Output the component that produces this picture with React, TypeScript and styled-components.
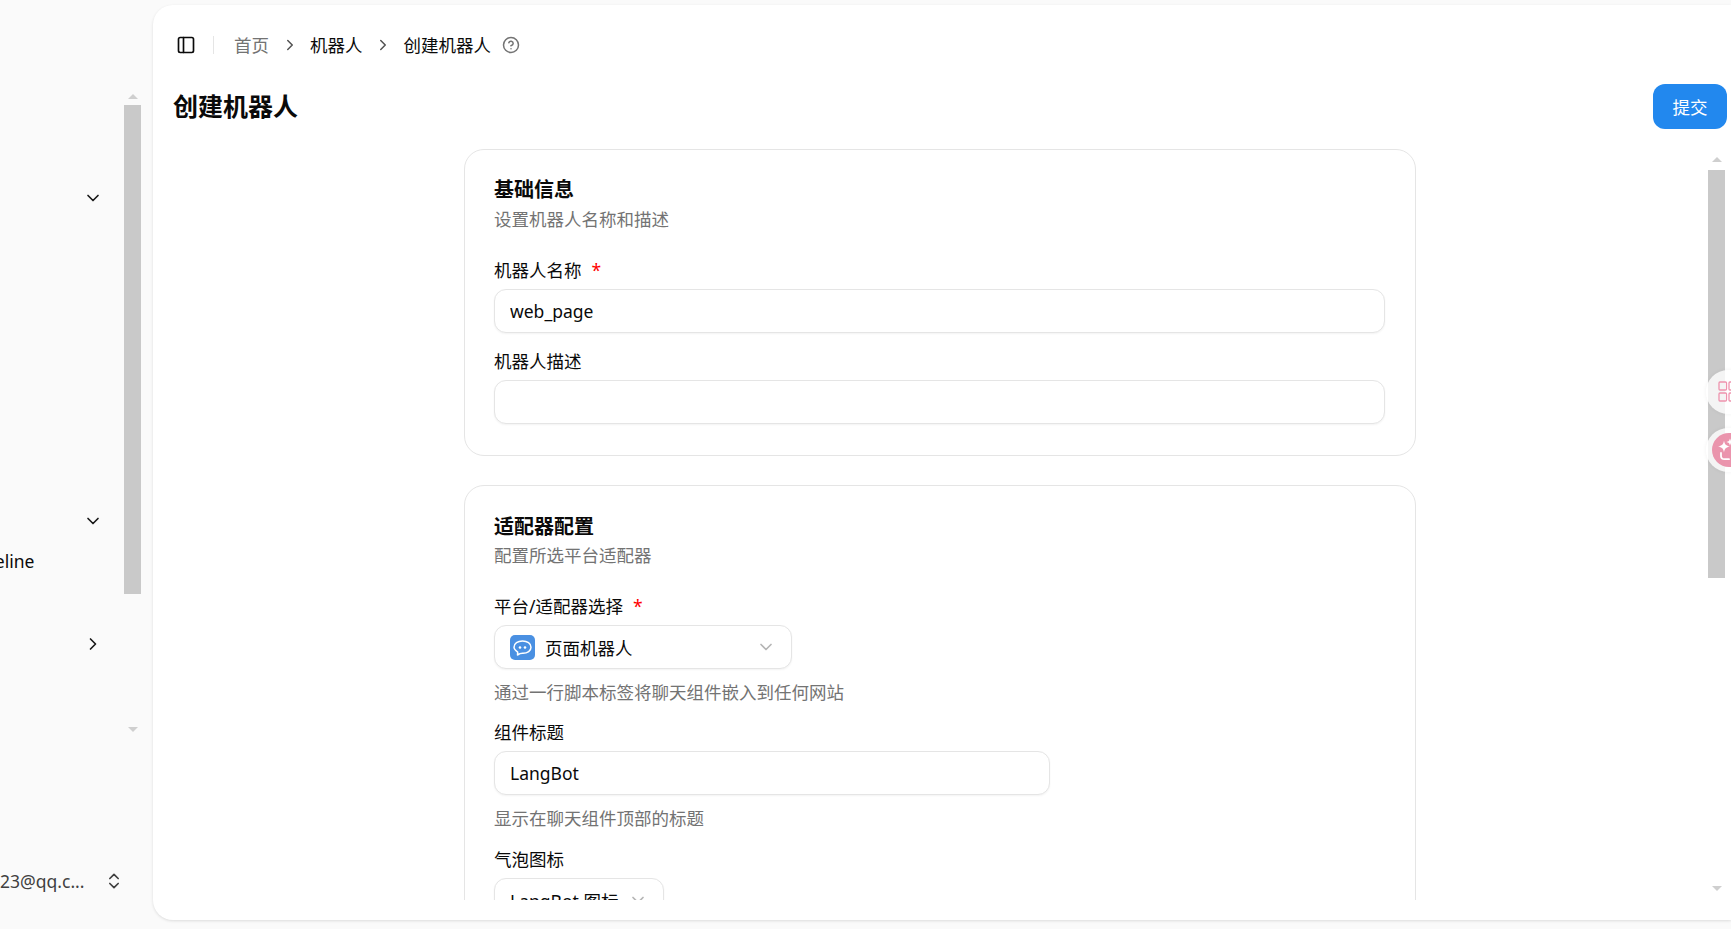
import styled, { createGlobalStyle } from 'styled-components';
import { ChevronDown, ChevronRight, ChevronsUpDown, CircleHelp, PanelLeft } from 'lucide-react';

const GlobalStyle = createGlobalStyle`
  html, body {
    margin: 0;
    padding: 0;
    height: 100%;
    overflow: hidden;
    background: #fafafa;
  }
  * { box-sizing: border-box; }
  body {
    font-family: "Noto Sans", "Noto Sans CJK SC", sans-serif;
    font-size: 17.5px;
    color: #0a0a0a;
  }
`;

const Layout = styled.div`
  display: flex;
  width: 1731px;
  height: 929px;
  overflow: hidden;
  position: relative;
`;

const Sidebar = styled.aside`
  width: 153px;
  flex-shrink: 0;
  display: flex;
  flex-direction: column;
  padding-top: 90px;
`;

const SideScroll = styled.div`
  display: flex;
  height: 646px;
  padding-right: 12px;
`;

const SideNav = styled.nav`
  flex: 1;
  overflow: hidden;
  padding-top: 86px;
`;

const NavSection = styled.div<{ $height: number }>`
  height: ${(p) => p.$height}px;
`;

const NavHeader = styled.div`
  height: 44px;
  display: flex;
  align-items: center;
  justify-content: flex-end;
  padding-right: 21px;
  color: #171717;
`;

const NavItem = styled.div`
  height: 36px;
  display: flex;
  align-items: center;
  justify-content: flex-start;
  margin-left: -31px;
  white-space: nowrap;
`;

const Scrollbar = styled.div<{ $top: number; $gap: number; $bottom: number }>`
  width: 17px;
  flex-shrink: 0;
  display: flex;
  flex-direction: column;
  align-items: center;
  padding-top: ${(p) => p.$top}px;
  padding-bottom: ${(p) => p.$bottom}px;
  gap: ${(p) => p.$gap}px;
`;

const Thumb = styled.div<{ $height: number }>`
  width: 17px;
  height: ${(p) => p.$height}px;
  background: #c9c9c9;
`;

const ArrowUp = styled.div`
  width: 0;
  height: 0;
  border-left: 5px solid transparent;
  border-right: 5px solid transparent;
  border-bottom: 5px solid #cfcfcf;
`;

const ArrowDown = styled.div`
  width: 0;
  height: 0;
  margin-top: auto;
  border-left: 5px solid transparent;
  border-right: 5px solid transparent;
  border-top: 5px solid #cfcfcf;
`;

const UserRow = styled.div`
  margin-top: 123px;
  height: 44px;
  display: flex;
  align-items: center;
  overflow: hidden;
  padding-right: 29px;
  justify-content: space-between;
  color: #404040;
`;

const UserMail = styled.span`
  margin-left: -10px;
  white-space: nowrap;
  font-size: 17.5px;
`;

const Panel = styled.main`
  width: 1578px;
  height: 915px;
  margin-top: 5px;
  flex-shrink: 0;
  background: #fff;
  border-radius: 20px 0 0 20px;
  box-shadow: 0 1px 3px rgba(0, 0, 0, 0.12);
  display: flex;
  flex-direction: column;
`;

const Breadcrumbs = styled.header`
  height: 40px;
  margin-top: 20px;
  padding-left: 23px;
  display: flex;
  align-items: center;
  color: #0a0a0a;
`;

const Divider = styled.span`
  width: 1px;
  height: 18px;
  background: #e5e5e5;
  margin: 0 20px 0 17px;
`;

const Crumb = styled.span<{ $muted?: boolean }>`
  color: ${(p) => (p.$muted ? '#737373' : '#0a0a0a')};
  line-height: 24px;
`;

const CrumbSep = styled.span`
  display: flex;
  margin: 0 11.5px;
  color: #525252;
`;

const HelpIcon = styled.span`
  display: flex;
  margin-left: 11px;
  color: #737373;
`;

const TitleRow = styled.div`
  height: 45px;
  margin-top: 19px;
  padding: 0 4px 0 20px;
  display: flex;
  align-items: center;
  justify-content: space-between;
`;

const PageTitle = styled.h1`
  margin: 0 0 2px;
  font-size: 25px;
  font-weight: 700;
  line-height: 32px;
`;

const SubmitButton = styled.button`
  width: 74px;
  height: 45px;
  border: 0;
  border-radius: 12px;
  background: #2288ee;
  color: #fff;
  font: inherit;
`;

const FormArea = styled.div`
  display: flex;
  height: 751px;
  margin-top: 20px;
  padding-right: 6px;
`;

const FormScroll = styled.div`
  flex: 1;
  overflow: hidden;
  padding-left: 311px;
`;

const Card = styled.section<{ $pad: number }>`
  width: 952px;
  border: 1px solid #e5e5e5;
  border-radius: 20px;
  padding: ${(p) => p.$pad}px 30px 31px 29px;
  margin-bottom: 29px;
`;

const CardTitle = styled.h2`
  margin: 0;
  font-size: 20px;
  font-weight: 700;
  line-height: 22px;
`;

const CardSub = styled.p<{ $top: number }>`
  margin: ${(p) => p.$top}px 0 0;
  color: #737373;
  line-height: 24px;
`;

const Field = styled.div<{ $top: number }>`
  margin-top: ${(p) => p.$top}px;
`;

const Label = styled.label`
  display: block;
  line-height: 20px;
  margin-bottom: 9px;
`;

const Required = styled.span`
  color: #f00;
  margin-left: 10px;
`;

const Input = styled.input<{ $width?: number }>`
  display: block;
  width: ${(p) => (p.$width ? `${p.$width}px` : '100%')};
  height: 44px;
  border: 1px solid #e5e5e5;
  border-radius: 12px;
  padding: 0 15px;
  font: inherit;
  color: #0a0a0a;
  background: #fff;
  box-shadow: 0 1px 2px rgba(0, 0, 0, 0.05);
  outline: none;
`;

const Select = styled.div<{ $width: number }>`
  width: ${(p) => p.$width}px;
  height: 44px;
  border: 1px solid #e5e5e5;
  border-radius: 12px;
  padding: 0 15px;
  display: flex;
  align-items: center;
  gap: 10px;
  background: #fff;
  box-shadow: 0 1px 2px rgba(0, 0, 0, 0.05);
`;

const SelectValue = styled.span`
  flex: 1;
  white-space: nowrap;
`;

const SelectChevron = styled.span`
  display: flex;
  color: #b5b5b5;
`;

const Hint = styled.p`
  margin: 11px 0 0;
  color: #737373;
  line-height: 24px;
`;

const FloatButton = styled.div<{ $top: number; $inset: number }>`
  position: absolute;
  top: ${(p) => p.$top}px;
  left: 1706px;
  width: 44px;
  height: 44px;
  border-radius: 50%;
  background: rgba(255, 255, 255, 0.8);
  box-shadow: 0 0 4px rgba(0, 0, 0, 0.06);
  display: flex;
  align-items: center;
  padding-left: ${(p) => p.$inset}px;
`;

const ChatGlyph = () => (
  <svg width="25" height="25" viewBox="0 0 25 25">
    <rect width="25" height="25" rx="5" fill="#4a90e2" />
    <path
      d="M12.500 6c4.700 0 8.500 2.500 8.500 6.300 0 3.600-3.500 6-8 6-1 0-2-.1-3 .4l-2.500 1.300.2-2.900C5.300 15.300 4 14 4 12.300 4 8.500 7.800 6 12.500 6z"
      fill="none"
      stroke="#fff"
      strokeWidth="1.500"
      strokeLinejoin="round"
    />
    <circle cx="10" cy="12.500" r="1.300" fill="#fff" />
    <circle cx="15" cy="12.500" r="1.300" fill="#fff" />
  </svg>
);

const GridGlyph = () => (
  <svg width="24" height="24" viewBox="0 0 24 24" fill="none" stroke="#ee8fab" strokeWidth="1.300" opacity="0.95">
    <rect x="1" y="2" width="7.500" height="8" rx="1" />
    <rect x="1" y="13" width="7.500" height="8" rx="1" />
    <rect x="11" y="2" width="7.500" height="8" rx="1" />
    <rect x="11" y="13" width="7.500" height="8" rx="1" />
  </svg>
);

const SparkGlyph = () => (
  <svg width="34" height="34" viewBox="0 0 34 34" opacity="0.95">
    <circle cx="17" cy="17" r="17" fill="#ea8fa9" />
    <path d="M12 7.500c.6 3.900 2.100 5.400 6 6-3.900.6-5.400 2.100-6 6-.6-3.900-2.100-5.400-6-6 3.900-.6 5.400-2.100 6-6z" fill="#fff" />
    <path d="M9 20v3c0 2 1.500 3.200 3.500 3.200H17" fill="none" stroke="#fff" strokeWidth="1.800" strokeLinecap="round" />
    <path d="M18 5.500l1 2.500 2.500 1-2.500 1-1 2.500-1-2.500-2.500-1 2.500-1z" fill="#fff" />
  </svg>
);

const App = () => {
  return (
    <Layout>
      <GlobalStyle />
      <Sidebar>
        <SideScroll>
          <SideNav>
            <NavSection $height={323}>
              <NavHeader>
                <ChevronDown size={20} />
              </NavHeader>
            </NavSection>
            <NavSection $height={123}>
              <NavHeader>
                <ChevronDown size={20} />
              </NavHeader>
              <NavItem>Pipeline</NavItem>
            </NavSection>
            <NavSection $height={44}>
              <NavHeader>
                <ChevronRight size={20} />
              </NavHeader>
            </NavSection>
          </SideNav>
          <Scrollbar $top={4} $gap={6} $bottom={4}>
            <ArrowUp />
            <Thumb $height={489} />
            <ArrowDown />
          </Scrollbar>
        </SideScroll>
        <UserRow>
          <UserMail>123@qq.c...</UserMail>
          <ChevronsUpDown size={20} />
        </UserRow>
      </Sidebar>
      <Panel>
        <Breadcrumbs>
          <PanelLeft size={20} />
          <Divider />
          <Crumb $muted>首页</Crumb>
          <CrumbSep>
            <ChevronRight size={18} />
          </CrumbSep>
          <Crumb>机器人</Crumb>
          <CrumbSep>
            <ChevronRight size={18} />
          </CrumbSep>
          <Crumb>创建机器人</Crumb>
          <HelpIcon>
            <CircleHelp size={18} />
          </HelpIcon>
        </Breadcrumbs>
        <TitleRow>
          <PageTitle>创建机器人</PageTitle>
          <SubmitButton>提交</SubmitButton>
        </TitleRow>
        <FormArea>
          <FormScroll>
            <Card $pad={29}>
              <CardTitle>基础信息</CardTitle>
              <CardSub $top={6}>设置机器人名称和描述</CardSub>
              <Field $top={29}>
                <Label>
                  机器人名称<Required>*</Required>
                </Label>
                <Input defaultValue="web_page" />
              </Field>
              <Field $top={18}>
                <Label>机器人描述</Label>
                <Input />
              </Field>
            </Card>
            <Card $pad={30}>
              <CardTitle>适配器配置</CardTitle>
              <CardSub $top={5}>配置所选平台适配器</CardSub>
              <Field $top={29}>
                <Label>
                  平台/适配器选择<Required>*</Required>
                </Label>
                <Select $width={298}>
                  <ChatGlyph />
                  <SelectValue>页面机器人</SelectValue>
                  <SelectChevron>
                    <ChevronDown size={20} />
                  </SelectChevron>
                </Select>
                <Hint>通过一行脚本标签将聊天组件嵌入到任何网站</Hint>
              </Field>
              <Field $top={18}>
                <Label>组件标题</Label>
                <Input $width={556} defaultValue="LangBot" />
                <Hint>显示在聊天组件顶部的标题</Hint>
              </Field>
              <Field $top={19}>
                <Label>气泡图标</Label>
                <Select $width={170}>
                  <SelectValue>LangBot 图标</SelectValue>
                  <SelectChevron>
                    <ChevronDown size={20} />
                  </SelectChevron>
                </Select>
              </Field>
            </Card>
          </FormScroll>
          <Scrollbar $top={8} $gap={8} $bottom={9}>
            <ArrowUp />
            <Thumb $height={408} />
            <ArrowDown />
          </Scrollbar>
        </FormArea>
      </Panel>
      <FloatButton $top={370} $inset={12}>
        <GridGlyph />
      </FloatButton>
      <FloatButton $top={428} $inset={6}>
        <SparkGlyph />
      </FloatButton>
    </Layout>
  );
};

export default App;
